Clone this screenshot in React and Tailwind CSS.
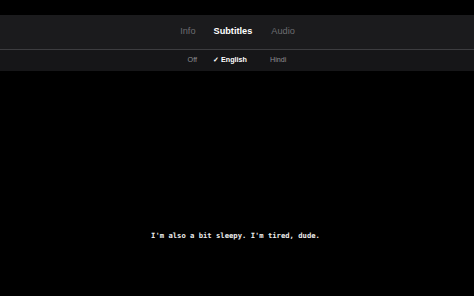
import React from "react";

export default function App() {
  return (
    <div className="w-[474px] h-[296px] bg-black flex flex-col overflow-hidden" style={{ fontFamily: '"Liberation Sans", Arial, sans-serif' }}>
      <div className="h-[15px]" />
      <div className="bg-[#1b1b1d] flex flex-col">
        <div className="h-[34px] flex items-center justify-center text-[9.2px] pl-[1px]">
          <span className="text-[#6c6c70]">Info</span>
          <span className="text-white font-bold ml-[18px]">Subtitles</span>
          <span className="text-[#6c6c70] ml-[19px]">Audio</span>
        </div>
        <div className="h-px bg-[#3d3d40]" />
        <div className="h-[21px] flex items-center justify-center text-[7.2px] bg-[#161618]">
          <span className="text-[#8e8e93]">Off</span>
          <span className="text-white font-bold ml-[16px]">✓ English</span>
          <span className="text-[#8e8e93] ml-[23px]">Hindi</span>
        </div>
      </div>
      <div className="flex-1 flex items-end justify-center pb-[57px]">
        <p className="text-[7.2px] text-[#ececec] font-bold leading-none pr-[3px]" style={{ fontFamily: '"DejaVu Sans Mono", "Liberation Mono", monospace' }}>
          I'm also a bit sleepy. I'm tired, dude.
        </p>
      </div>
    </div>
  );
}
